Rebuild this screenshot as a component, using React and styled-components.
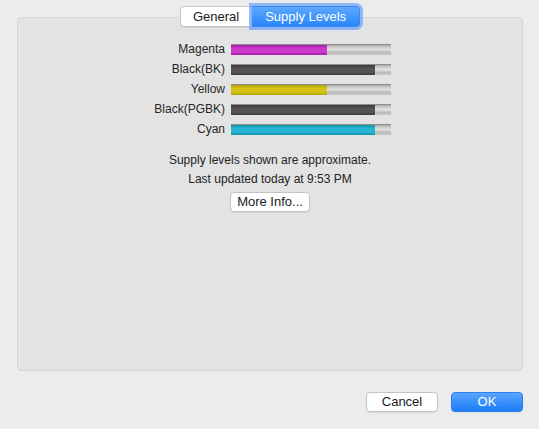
import React from 'react';
import styled, { createGlobalStyle } from 'styled-components';

const GlobalStyle = createGlobalStyle`
  html, body {
    margin: 0;
    padding: 0;
    background: #ececec;
  }
  body {
    font-family: "Liberation Sans", Arial, sans-serif;
    color: #222;
  }
`;

const supplies = [
  { name: 'Magenta', level: 60, color: '#cc3acc', dark: '#a41fa4' },
  { name: 'Black(BK)', level: 90, color: '#545454', dark: '#3c3c3c' },
  { name: 'Yellow', level: 60, color: '#d6c414', dark: '#b3a107' },
  { name: 'Black(PGBK)', level: 90, color: '#545454', dark: '#3c3c3c' },
  { name: 'Cyan', level: 90, color: '#24b6d2', dark: '#1590a8' },
];

const App = () => {
  return (
    <Window>
      <GlobalStyle />
      <TabBar>
        <Segmented>
          <Segment>General</Segment>
          <Segment active>Supply Levels</Segment>
        </Segmented>
      </TabBar>
      <Panel>
        <LevelGrid>
          {supplies.map((s) => (
            <React.Fragment key={s.name}>
              <Label>{s.name}</Label>
              <Track>
                <Fill $color={s.color} $dark={s.dark} style={{ width: `${s.level}%` }} />
              </Track>
            </React.Fragment>
          ))}
        </LevelGrid>
        <Note>Supply levels shown are approximate.</Note>
        <Note>Last updated today at 9:53 PM</Note>
        <ButtonRow>
          <Button>More Info...</Button>
        </ButtonRow>
      </Panel>
      <Footer>
        <Button $wide>Cancel</Button>
        <Button $wide $primary>OK</Button>
      </Footer>
    </Window>
  );
};

const Window = styled.div`
  width: 539px;
  height: 429px;
  box-sizing: border-box;
  padding: 6px 16px 0 17px;
  display: flex;
  flex-direction: column;
`;

const TabBar = styled.div`
  display: flex;
  justify-content: center;
  margin-bottom: -11px;
  position: relative;
  z-index: 1;
`;

const Segmented = styled.div`
  display: flex;
  height: 22px;
`;

const Segment = styled.div`
  box-sizing: border-box;
  height: 21px;
  line-height: 19px;
  font-size: 13px;
  padding: 0 ${(p) => (p.active ? '13px' : '12px')};
  border: 1px solid ${(p) => (p.active ? '#3b86f0' : '#c6c6c6')};
  background: ${(p) => (p.active ? 'linear-gradient(#5ea8ff, #2a86fb)' : '#fff')};
  color: ${(p) => (p.active ? '#fff' : '#1a1a1a')};
  border-radius: ${(p) => (p.active ? '0 4px 4px 0' : '4px 0 0 4px')};
  box-shadow: ${(p) => (p.active ? '0 0 0 3px rgba(110, 165, 250, 0.75)' : '0 1px 0 rgba(0,0,0,0.08)')};
  border-left-width: ${(p) => (p.active ? '0' : '1px')};
`;

const Panel = styled.div`
  height: 354px;
  box-sizing: border-box;
  background: #e3e3e3;
  border: 1px solid #d5d5d5;
  border-radius: 4px;
  padding-top: 26px;
  display: flex;
  flex-direction: column;
`;

const LevelGrid = styled.div`
  display: grid;
  grid-template-columns: 100px 160px;
  column-gap: 6px;
  row-gap: 9px;
  margin-left: 107px;
  align-items: center;
  margin-bottom: 16px;
`;

const Label = styled.div`
  text-align: right;
  font-size: 12px;
  line-height: 11px;
  color: #262626;
`;

const Track = styled.div`
  height: 11px;
  box-sizing: border-box;
  border-top: 1px solid #8e8e8e;
  background: linear-gradient(#aaaaaa 0%, #d0d0d0 25%, #e0e0e0 45%, #bcbcbc 75%, #c6c6c6 100%);
  display: flex;
`;

const Fill = styled.div`
  height: 100%;
  background: linear-gradient(
    ${(p) => p.$dark} 0%,
    ${(p) => p.$color} 35%,
    ${(p) => p.$color} 70%,
    ${(p) => p.$dark} 100%
  );
`;

const Note = styled.div`
  text-align: center;
  font-size: 12px;
  line-height: 19px;
`;

const ButtonRow = styled.div`
  display: flex;
  justify-content: center;
  margin-top: 3px;
`;

const Button = styled.div`
  box-sizing: border-box;
  height: 20px;
  line-height: 18px;
  min-width: ${(p) => (p.$wide ? '72px' : '0')};
  padding: 0 ${(p) => (p.$wide ? '9px' : '6px')};
  text-align: center;
  font-size: 13px;
  border-radius: 4px;
  border: 1px solid ${(p) => (p.$primary ? '#2d7ef0' : '#c4c4c4')};
  background: ${(p) => (p.$primary ? 'linear-gradient(#5aa6ff, #1b7cf6)' : '#fff')};
  color: ${(p) => (p.$primary ? '#fff' : '#1a1a1a')};
  box-shadow: 0 1px 1px rgba(0, 0, 0, 0.08);
`;

const Footer = styled.div`
  display: flex;
  justify-content: flex-end;
  gap: 13px;
  margin-top: 21px;
`;

export default App;
